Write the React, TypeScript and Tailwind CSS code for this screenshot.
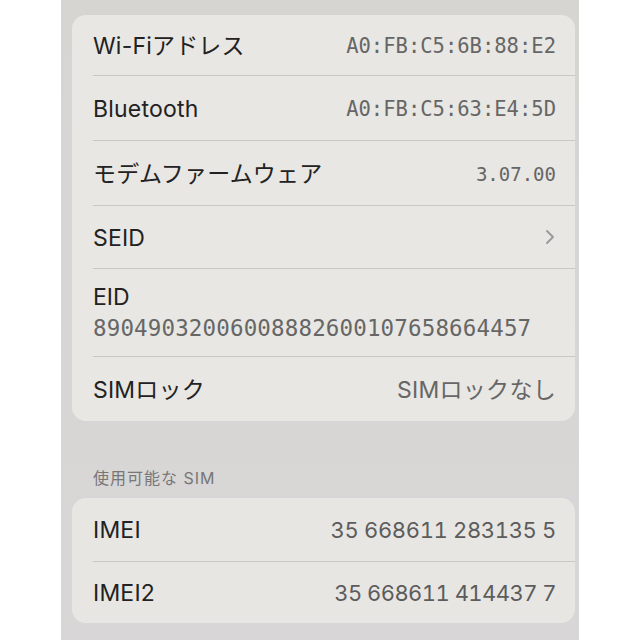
import React from "react";

const sans = { fontFamily: '"Inter", "Noto Sans CJK JP", sans-serif' };

function Row({ label, value, h, last }: { label: string; value?: React.ReactNode; h: string; last?: boolean }) {
  return (
    <div className={`flex items-center pl-[21px] ${h}`}>
      <div className={`flex-1 h-full flex items-center justify-between pr-[19px] ${last ? "" : "border-b border-[#c9c8c3]"}`}>
        <span className="text-[23px] text-[#222] tracking-[0.2px] pt-[2px]">{label}</span>
        {value}
      </div>
    </div>
  );
}

export default function App() {
  const monoCls = "text-[20.5px] text-[#666] pt-[2px]";
  const monoStyle = { fontFamily: '"DejaVu Sans Mono", monospace' };
  return (
    <div className="w-[640px] h-[640px] bg-white flex justify-center" style={sans}>
      <div className="w-[518px] h-full bg-gradient-to-b from-[#d6d5d2] to-[#d9d6d7] pl-[11px] pr-[4px] pt-[15px] flex flex-col">
        <div className="bg-[#e8e7e3] rounded-[14px] flex flex-col">
          <Row h="h-[61px]" label="Wi-Fiアドレス" value={<span className={monoCls} style={monoStyle}>A0:FB:C5:6B:88:E2</span>} />
          <Row h="h-[65px]" label="Bluetooth" value={<span className={monoCls} style={monoStyle}>A0:FB:C5:63:E4:5D</span>} />
          <Row h="h-[65px]" label="モデムファームウェア" value={<span className="text-[19px] text-[#666] pt-[2px]" style={monoStyle}>3.07.00</span>} />
          <Row
            h="h-[63px]"
            label="SEID"
            value={
              <svg width="10" height="16" viewBox="0 0 10 16" className="mr-[1px]">
                <path d="M2 2 L8 8 L2 14" fill="none" stroke="#9b9b9b" strokeWidth="2" strokeLinecap="round" strokeLinejoin="round" />
              </svg>
            }
          />
          <div className="pl-[21px] h-[88px]">
            <div className="h-full border-b border-[#c9c8c3] flex flex-col pt-[14px]">
              <span className="text-[23px] text-[#222] leading-[28px]">EID</span>
              <span className="text-[22.5px] text-[#666] leading-[28px] mt-[3px] tracking-[0.15px]" style={monoStyle}>
                89049032006008882600107658664457
              </span>
            </div>
          </div>
          <Row h="h-[64px]" last label="SIMロック" value={<span className="text-[23px] text-[#666] tracking-[0.3px] pt-[2px]">SIMロックなし</span>} />
        </div>
        <div className="h-[77px] flex items-end pl-[21px] pb-[8px]">
          <span className="text-[16px] text-[#777] tracking-[1px]">使用可能な SIM</span>
        </div>
        <div className="bg-[#e7e6e3] rounded-[14px] flex flex-col">
          <Row h="h-[64px]" label="IMEI" value={<span className="text-[22px] text-[#5c5c5c] tabular-nums tracking-[-0.35px] pt-[2px]">35 668611 283135 5</span>} />
          <Row h="h-[61px]" last label="IMEI2" value={<span className="text-[22px] text-[#5c5c5c] tabular-nums tracking-[-0.55px] pt-[2px]">35 668611 414437 7</span>} />
        </div>
      </div>
    </div>
  );
}
